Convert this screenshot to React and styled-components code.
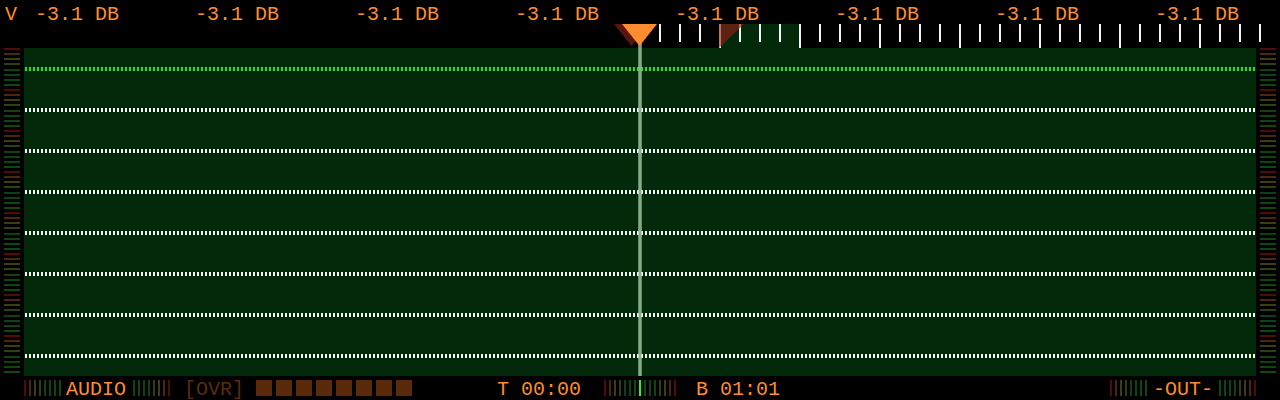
import React from "react";
import styled, { createGlobalStyle } from "styled-components";

const ORANGE = "#ff8c2e";
const TRACK_GREEN = "#03290b";
// LED palette: red at the top of each block fading to green
const LED = ["#520b0b", "#4a280e", "#403c11", "#2d4011", "#134013", "#0e4313", "#0d4513", "#0d4713"];
const LED_UP = [...LED];
const LED_DOWN = [...LED].reverse();

const Global = createGlobalStyle`
  html, body { margin: 0; padding: 0; background: #000; }
  body { width: 1280px; height: 400px; overflow: hidden; }
`;

const Deck = styled.div`
  position: relative;
  width: 1280px;
  height: 400px;
  background: #000;
  display: flex;
  flex-direction: column;
  font-family: "Liberation Mono", "DejaVu Sans Mono", monospace;
  font-size: 20px;
  color: ${ORANGE};
  overflow: hidden;
`;

/* ---- level labels across the top ---- */
const LabelRow = styled.div`
  flex: none;
  display: flex;
  height: 24px;
  box-sizing: border-box;
  padding: 5px 0 0 5px;
  line-height: 19px;
  white-space: pre;
`;

const Label = styled.span`
  flex: none;
  width: ${(p) => p.$w}px;
`;

/* ---- time ruler ---- */
const RulerBar = styled.div`
  flex: none;
  height: 24px;
`;

const RulerSvg = styled.svg`
  display: block;
`;

function Ruler() {
  const ticks = [];
  for (let x = 660; x <= 1260; x += 20) ticks.push(x);
  return (
    <RulerBar>
      <RulerSvg width="1280" height="24" viewBox="0 0 1280 24" shapeRendering="crispEdges">
        <rect x="720" y="0" width="80" height="24" fill={TRACK_GREEN} />
        {ticks.map((x) => (
          <rect
            key={x}
            x={x - 1}
            y="0"
            width="2"
            height={(x - 720) % 80 === 0 ? 24 : 18}
            fill="#f4f4f4"
          />
        ))}
        <polygon
          points="719,0 744,0 719,24"
          fill="rgba(150,32,20,0.6)"
          shapeRendering="auto"
        />
      </RulerSvg>
    </RulerBar>
  );
}

/* ---- track body with side meters ---- */
const Body = styled.div`
  flex: none;
  display: flex;
  height: 328px;
`;

const MeterColumn = styled.div`
  flex: none;
  width: 24px;
  box-sizing: border-box;
  padding: 0 4px;
  display: flex;
  flex-direction: column;
`;

const MeterSlot = styled.div`
  flex: 1;
  display: flex;
  align-items: flex-start;
`;

const MeterLed = styled.div`
  width: 16px;
  height: 2px;
  background: ${(p) => p.$c};
`;

function SideMeter() {
  return (
    <MeterColumn>
      {Array.from({ length: 64 }, (_, i) => (
        <MeterSlot key={i}>
          <MeterLed $c={LED[i % 8]} />
        </MeterSlot>
      ))}
    </MeterColumn>
  );
}

const Track = styled.div`
  flex: 1;
  background: ${TRACK_GREEN};
  display: grid;
  grid-template-rows: repeat(8, 1fr);
`;

const Lane = styled.div`
  box-sizing: border-box;
  padding: 19px 1px 0;
`;

const Dots = styled.div`
  height: 4px;
  background: repeating-linear-gradient(
    to right,
    ${(p) => p.$c} 0 2px,
    transparent 2px 4px
  );
`;

/* ---- playhead ---- */
const PlayheadLine = styled.div`
  position: absolute;
  left: 638px;
  top: 24px;
  width: 4px;
  height: 352px;
  background: linear-gradient(
    to right,
    rgba(150, 195, 150, 0.55),
    rgba(200, 235, 200, 0.75) 50%,
    rgba(150, 195, 150, 0.55)
  );
  pointer-events: none;
`;

const PlayheadCap = styled.svg`
  position: absolute;
  left: 612px;
  top: 24px;
  pointer-events: none;
`;

/* ---- status bar ---- */
const Footer = styled.div`
  flex: none;
  display: flex;
  align-items: flex-start;
  height: 24px;
  box-sizing: border-box;
  padding: 4px 24px 0;
  line-height: 20px;
  white-space: pre;
`;

const Bars = styled.div`
  flex: none;
  display: flex;
  gap: 3px;
  margin-left: ${(p) => (p.$auto ? "auto" : `${p.$ml || 0}px`)};
`;

const Bar = styled.div`
  width: 2px;
  height: 16px;
  background: ${(p) => p.$c};
`;

const Readout = styled.span`
  flex: none;
  height: 20px;
  margin-left: ${(p) => p.$ml || 0}px;
  color: ${(p) => (p.$dim ? "#5c2c0c" : ORANGE)};
`;

const Squares = styled.div`
  flex: none;
  display: flex;
  gap: 4px;
  margin-left: ${(p) => p.$ml || 0}px;
`;

const Square = styled.div`
  width: 16px;
  height: 16px;
  background: #5a2a0b;
`;

function LedBars({ colors, ml, auto }) {
  return (
    <Bars $ml={ml} $auto={auto}>
      {colors.map((c, i) => (
        <Bar key={i} $c={c} />
      ))}
    </Bars>
  );
}

const CENTER_METER = [...LED.slice(0, 7), "#1aff1a", ...LED.slice(0, 7).reverse()];

export default function App() {
  return (
    <>
      <Global />
      <Deck>
        <LabelRow>
          <Label $w={30}>V</Label>
          {Array.from({ length: 8 }, (_, i) => (
            <Label key={i} $w={i === 7 ? 90 : 160}>
              -3.1 DB
            </Label>
          ))}
        </LabelRow>

        <Ruler />

        <Body>
          <SideMeter />
          <Track>
            {Array.from({ length: 8 }, (_, i) => (
              <Lane key={i}>
                <Dots $c={i === 0 ? "#22e322" : "#f2f2f2"} />
              </Lane>
            ))}
          </Track>
          <SideMeter />
        </Body>

        <Footer>
          <LedBars colors={LED_UP} />
          <Readout $ml={5}>AUDIO</Readout>
          <LedBars colors={LED_DOWN} ml={7} />
          <Readout $ml={14} $dim>[OVR]</Readout>
          <Squares $ml={12}>
            {Array.from({ length: 8 }, (_, i) => (
              <Square key={i} />
            ))}
          </Squares>
          <Readout $ml={85}>T 00:00</Readout>
          <LedBars colors={CENTER_METER} ml={23} />
          <Readout $ml={20}>B 01:01</Readout>
          <LedBars colors={LED_UP} auto />
          <Readout $ml={6}>-OUT-</Readout>
          <LedBars colors={LED_DOWN} ml={6} />
        </Footer>

        <PlayheadLine />
        <PlayheadCap width="48" height="24" viewBox="0 0 48 24">
          <polygon points="2,0 37,0 19.5,22" fill="#5a1510" />
          <polygon points="10,0 45,0 27.5,22" fill={ORANGE} />
        </PlayheadCap>
      </Deck>
    </>
  );
}
